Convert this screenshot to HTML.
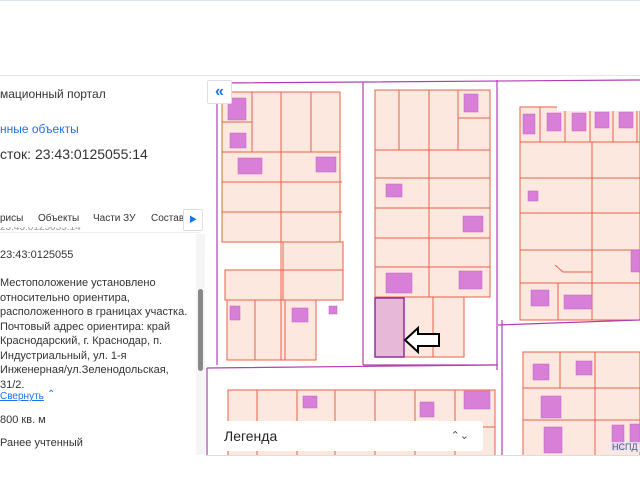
<!DOCTYPE html>
<html><head><meta charset="utf-8"><style>
*{margin:0;padding:0;box-sizing:border-box}
body{width:640px;height:480px;overflow:hidden;background:#fff;font-family:"Liberation Sans","Noto Sans CJK SC",sans-serif;position:relative;color:#333}
.abs{position:absolute;white-space:nowrap}
</style></head><body>
<div class="abs" style="left:0;top:0;width:640px;height:1px;background:#dde6f0"></div>
<div class="abs" style="left:0;top:75px;width:640px;height:1px;background:#e6e6e6"></div>
<svg class="abs" style="left:205px;top:76px" width="435" height="380" viewBox="205 76 435 380">
<rect x="205" y="76" width="435" height="380" fill="#fff"/>
<g fill="#fde8e0" stroke="#e8604a" stroke-width="1">
<rect x="222" y="92" width="118" height="150"/>
<rect x="283" y="242" width="60" height="58"/>
<rect x="225" y="270" width="58" height="30"/>
<rect x="227" y="300" width="89" height="60"/>
<rect x="375" y="90" width="115" height="207"/>
<rect x="404" y="297" width="60" height="60"/>
<rect x="520" y="107" width="120" height="213"/>
<rect x="228" y="390" width="267" height="66"/>
<rect x="523" y="352" width="117" height="104"/>
</g>
<g stroke="#e8604a" stroke-width="1" fill="none">
<path d="M252 92V152M281 92V360M311 92V152M222 122H252M222 152H340M222 182H342M222 212H342M222 242H342M283 270H343M255 300V360M285 300V360"/>
<path d="M399 90V150M429 90V297M458 90V150M458 118H490M375 150H490M375 178H490M375 208H490M375 238H490M375 267H490M433 297V357"/>
<path d="M540 107V142M565 107V142M590 107V142M613 107V142M637 107V142M520 142H640M592 142V320M520 178H640M520 213H640M520 250H640M520 283H640M558 283V320M555 265L563 272H592"/>
<path d="M257 390V456M297 390V456M335 390V456M375 390V456M415 390V456M455 390V456M228 427H495M560 352V388M595 352V456M523 388H640M523 420H640"/>
</g>
<g stroke="#b040b0" stroke-width="1.2" fill="none">
<path d="M217 86V365M222 83L640 80M363 82V365M497 80V370M495 365H363M207 368L498 365M207 368V456M498 325L640 320M502 320V456"/>
</g>
<rect x="375" y="298" width="29" height="59" fill="#e8b8d8" stroke="#9030a0" stroke-width="1.5"/>
<g fill="#d880d8" stroke="#c060c0" stroke-width=".5">
<rect x="228" y="98" width="18" height="22"/><rect x="230" y="133" width="16" height="15"/><rect x="238" y="158" width="24" height="16"/><rect x="316" y="157" width="20" height="15"/>
<rect x="230" y="306" width="10" height="14"/><rect x="292" y="308" width="16" height="14"/><rect x="329" y="306" width="8" height="8"/>
<rect x="464" y="94" width="14" height="18"/><rect x="386" y="184" width="16" height="13"/><rect x="463" y="216" width="20" height="16"/>
<rect x="386" y="273" width="26" height="20"/><rect x="459" y="271" width="23" height="18"/>
<rect x="523" y="114" width="12" height="20"/><rect x="547" y="113" width="14" height="18"/><rect x="572" y="113" width="14" height="18"/><rect x="595" y="112" width="14" height="16"/><rect x="619" y="112" width="14" height="16"/>
<rect x="528" y="191" width="10" height="10"/><rect x="631" y="250" width="9" height="22"/><rect x="531" y="290" width="18" height="16"/><rect x="564" y="295" width="28" height="14"/>
<rect x="533" y="364" width="16" height="16"/><rect x="576" y="361" width="16" height="14"/><rect x="541" y="396" width="20" height="22"/><rect x="544" y="427" width="18" height="26"/><rect x="612" y="425" width="12" height="25"/><rect x="630" y="424" width="10" height="20"/>
<rect x="303" y="396" width="14" height="12"/><rect x="420" y="402" width="14" height="15"/><rect x="464" y="391" width="26" height="18"/>
</g>
<path d="M405 340L418 328V334H439V346H418V352Z" fill="#fff" stroke="#000" stroke-width="2"/>
<rect x="557" y="86" width="83" height="25" fill="#fff"/>
</svg>
<div class="abs" style="left:207px;top:80px;width:25px;height:24px;background:#fff;border:1px solid #dde;border-radius:2px;color:#1a73e8;font-size:16px;font-weight:bold;text-align:center;line-height:21px">«</div>
<div class="abs" style="left:213px;top:421px;width:270px;height:30px;background:#fff;border-radius:3px;font-size:14px;line-height:30px;padding-left:11px;color:#222">Легенда<span style="position:absolute;right:14px;font-size:11px;color:#555">⌃⌄</span></div>
<div class="abs" style="left:610px;top:442px;font-size:9px;color:#557;background:rgba(230,235,245,.8);padding:0 2px">НСПД 2</div>
<div class="abs" style="left:0;top:455px;width:640px;height:25px;background:#fff;border-top:1px solid #ddd"></div>
<div class="abs" style="left:0;top:76px;width:206px;height:380px;background:#fff"></div>
<div class="abs" style="left:0;top:87px;font-size:12px">мационный портал</div>
<div class="abs" style="left:0;top:122px;font-size:12px;color:#1a73e8">нные объекты</div>
<div class="abs" style="left:0;top:146px;font-size:14px;color:#333">сток: 23:43:0125055:14</div>
<div class="abs" style="left:0;top:213px;font-size:10px">рисы</div>
<div class="abs" style="left:38px;top:213px;font-size:10px">Объекты</div>
<div class="abs" style="left:93px;top:213px;font-size:10px">Части ЗУ</div>
<div class="abs" style="left:151px;top:213px;font-size:10px">Состав</div>
<div class="abs" style="left:183px;top:209px;width:20px;height:22px;background:#fff;border:1px solid #dde;border-radius:2px;color:#1a73e8;font-size:8px;text-align:center;line-height:20px">▶</div>
<div class="abs" style="left:0;top:232px;width:200px;height:1px;background:#eee"></div>
<div class="abs" style="left:0;top:227px;font-size:10px;color:#999;height:6px;overflow:hidden;line-height:2px">23:43:0125055:14</div>
<div class="abs" style="left:0;top:249px;font-size:11px">23:43:0125055</div>
<div class="abs" style="left:0;top:276px;font-size:11px;line-height:14.5px;white-space:normal;width:195px">Местоположение установлено относительно ориентира, расположенного в границах участка. Почтовый адрес ориентира: край Краснодарский, г. Краснодар, п. Индустриальный, ул. 1-я Инженерная/ул.Зеленодольская, 31/2.</div>
<div class="abs" style="left:0;top:391px;font-size:10px;color:#1a73e8;text-decoration:underline">Свернуть</div>
<div class="abs" style="left:47px;top:389px;font-size:10px;color:#1a73e8">⌃</div>
<div class="abs" style="left:0;top:414px;font-size:11px">800 кв. м</div>
<div class="abs" style="left:0;top:437px;font-size:11px">Ранее учтенный</div>
<div class="abs" style="left:196px;top:234px;width:9px;height:221px;background:#f5f5f5"></div>
<div class="abs" style="left:198px;top:289px;width:5px;height:82px;background:#888;border-radius:3px"></div>
</body></html>
